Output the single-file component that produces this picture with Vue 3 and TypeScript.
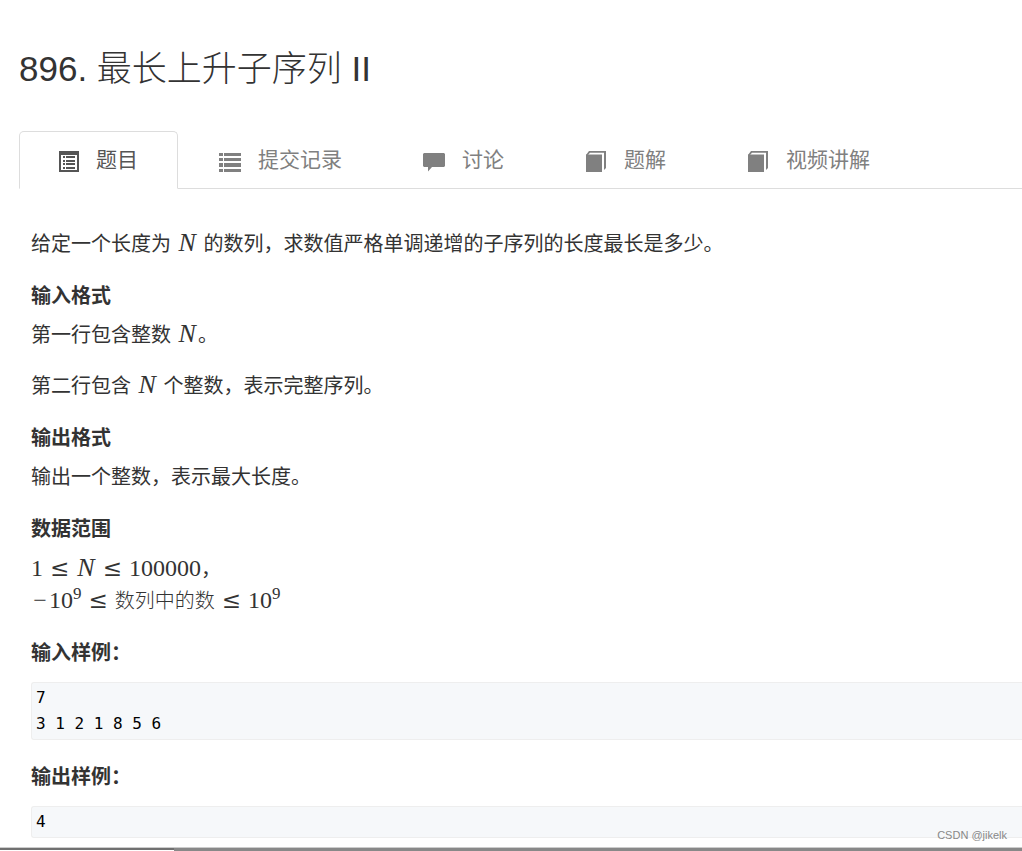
<script setup lang="ts">
import { ref } from 'vue'

interface Tab {
  label: string
  icon: 'table' | 'list' | 'comment' | 'book'
}

const tabs: Tab[] = [
  { label: '题目', icon: 'table' },
  { label: '提交记录', icon: 'list' },
  { label: '讨论', icon: 'comment' },
  { label: '题解', icon: 'book' },
  { label: '视频讲解', icon: 'book' },
]

const active = ref(0)
const sampleInput = '7\n3 1 2 1 8 5 6'
const sampleOutput = '4'
</script>

<template>
  <div class="page">
    <main>
      <h1>896. 最长上升子序列 II</h1>

      <nav class="tabs">
        <a
          v-for="(tab, i) in tabs"
          :key="tab.label"
          href="#"
          class="tab"
          :class="{ active: i === active }"
          @click.prevent="active = i"
        >
          <svg class="icon" viewBox="0 0 24 24" aria-hidden="true">
            <g v-if="tab.icon === 'table'">
              <path fill-rule="evenodd" d="M2 3h20v21H2zM4 7v15h16V7z" />
              <path d="M6 8h2v2H6zM9 8h9v2H9zM6 12h2v2H6zM9 12h9v2H9zM6 15h2v2H6zM9 15h9v2H9zM6 19h2v2H6zM9 19h9v2H9z" />
            </g>
            <path
              v-else-if="tab.icon === 'list'"
              d="M0 5h4v3H0zM5 5h17v3H5zM0 10h4v3H0zM5 10h17v3H5zM0 15h4v4H0zM5 15h17v4H5zM0 21h4v3H0zM5 21h17v3H5z"
            />
            <path
              v-else-if="tab.icon === 'comment'"
              d="M1 5h20l1 1v12l-1 1H9l-4 4.500v-4.500H1l-1-1V6z"
            />
            <g v-else>
              <path d="M1 6.500h16V24H1z" />
              <path d="M1 7l3-4h17v17l-2 2V4.800H5L3 7z" />
            </g>
          </svg>
          <span>{{ tab.label }}</span>
        </a>
      </nav>

      <article>
        <p>给定一个长度为 <i class="var">N</i> 的数列，求数值严格单调递增的子序列的长度最长是多少。</p>

        <h2>输入格式</h2>
        <p>第一行包含整数 <i class="var">N</i>。</p>
        <p>第二行包含 <i class="var">N</i> 个整数，表示完整序列。</p>

        <h2>输出格式</h2>
        <p>输出一个整数，表示最大长度。</p>

        <h2>数据范围</h2>
        <p>
          <span class="math">1 <span class="rel">≤</span> <i class="var">N</i> <span class="rel">≤</span> 100000</span>，<br />
          <span class="math"><span class="minus">−</span>10<sup>9</sup> <span class="rel">≤</span> <span class="song">数列中的数</span> <span class="rel">≤</span> 10<sup>9</sup></span>
        </p>

        <h2>输入样例：</h2>
        <pre><code>{{ sampleInput }}</code></pre>

        <h2>输出样例：</h2>
        <pre><code>{{ sampleOutput }}</code></pre>
      </article>
    </main>
    <footer><div class="thumb"></div></footer>
    <small class="watermark">CSDN @jikelk</small>
  </div>
</template>

<style>
body {
  margin: 0;
  background: #fff;
}
</style>

<style scoped>
.page {
  position: relative;
  display: flex;
  flex-direction: column;
  min-height: 100vh;
  color: #333;
  font-family: "Liberation Sans", "Noto Sans CJK SC", sans-serif;
  font-size: 20px;
}
main {
  flex: 1;
  padding: 45px 0 0 19px;
}
h1 {
  margin: 0 0 38px;
  font-size: 35px;
  line-height: 48px;
  font-weight: 300;
}
.tabs {
  display: flex;
  border-bottom: 1px solid #ddd;
}
.tab {
  display: flex;
  align-items: center;
  gap: 15px;
  height: 56px;
  margin: 0 3px -1px 0;
  padding: 0 39px 0 37px;
  border: 1px solid transparent;
  border-radius: 5px 5px 0 0;
  color: #808080;
  font-size: 21px;
  line-height: 28px;
  white-space: nowrap;
  text-decoration: none;
}
.tab.active {
  color: #555;
  background: #fff;
  border-color: #ddd;
  border-bottom-color: #fff;
}
.icon {
  width: 24px;
  height: 24px;
  fill: currentColor;
}
article {
  padding: 40px 0 0 12px;
}
p {
  margin: 0 0 20px;
  line-height: 31px;
}
h2 {
  margin: 22px 0 10px;
  font-size: 20px;
  line-height: 28px;
  font-weight: 700;
}
.math {
  font-family: "Liberation Serif", serif;
  font-size: 24px;
  line-height: 31px;
}
.var {
  margin: 0 2px;
  font-family: "Liberation Serif", serif;
  font-size: 26px;
  line-height: 24px;
}
.rel {
  margin: 0 1px;
  font-family: "DejaVu Serif", serif;
  font-size: 23px;
  line-height: 24px;
}
.minus {
  display: inline-block;
  width: 18px;
  line-height: 24px;
  text-align: center;
}
.math .var {
  margin: 0 1px;
}
sup {
  font-size: 17px;
  line-height: 0;
}
.song {
  font-family: "Noto Sans CJK SC", sans-serif;
  font-size: 20px;
  line-height: 24px;
  font-weight: 300;
}
pre {
  margin: 15px 0 23px;
  padding: 2px 4px;
  border: 1px solid #eee;
  border-right: 0;
  border-radius: 3px 0 0 3px;
  background: #f6f8fa;
  color: #000;
  font-family: "DejaVu Sans Mono", monospace;
  font-size: 16px;
  line-height: 26px;
}
pre + h2 {
  margin-top: 23px;
}
pre code {
  display: block;
  font: inherit;
}
article pre:last-child {
  margin-bottom: 0;
}
footer {
  height: 3px;
  border-top: 1px solid #ccc;
  background: #888;
}
.thumb {
  width: 17%;
  height: 2px;
  border-bottom: 1px solid #fff;
  background: #707070;
}
.watermark {
  position: absolute;
  right: 15px;
  bottom: 8px;
  color: #888;
  font-size: 11px;
  line-height: 16px;
}
</style>
